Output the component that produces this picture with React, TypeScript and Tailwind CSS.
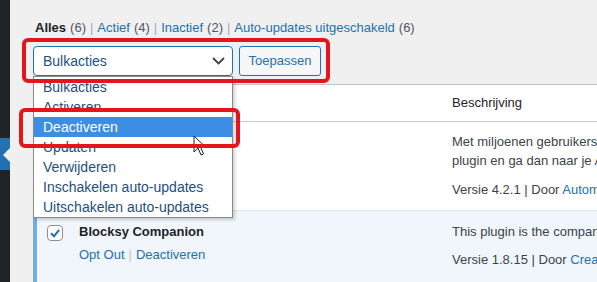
import React from 'react';

const options = [
  'Bulkacties',
  'Activeren',
  'Deactiveren',
  'Updaten',
  'Verwijderen',
  'Inschakelen auto-updates',
  'Uitschakelen auto-updates',
];

const Sep = () => <span className="px-[4px] text-[#a7aaad]">|</span>;

const Checkbox = ({ checked }: { checked?: boolean }) => (
  <span className="flex h-[16px] w-[16px] items-center justify-center rounded-[4px] border border-[#8c8f94] bg-white">
    {checked && (
      <svg width="14" height="14" viewBox="0 0 14 14">
        <path d="M3 7.2 L6 10.2 L11.2 3.8" fill="none" stroke="#2271b1" strokeWidth="2" />
      </svg>
    )}
  </span>
);

const App = () => {
  return (
    <div className="relative flex h-[282px] w-[597px] overflow-hidden bg-[#f0f0f1] font-['Liberation_Sans',Arial,sans-serif] text-[13px] text-[#3c434a]">
      {/* admin sidebar edge */}
      <aside className="flex w-[10px] shrink-0 flex-col bg-[#1d2327]">
        <div className="h-[138px]" />
        <div className="relative h-[32px] bg-[#2271b1]">
          <span className="absolute right-0 top-[10px] h-0 w-0 border-y-[7px] border-r-[7px] border-y-transparent border-r-[#f0f0f1]" />
        </div>
      </aside>

      <main className="min-w-0 flex-1 pl-[23px] pt-[19px]">
        {/* status filters */}
        <div className="flex h-[18px] items-center whitespace-nowrap pl-[2px] leading-[18px]">
          <span className="font-semibold text-[#1d2327]">Alles</span>
          <span className="ml-[4px] text-[#50575e]">(6)</span>
          <Sep />
          <span className="text-[#2271b1]">Actief</span>
          <span className="ml-[4px] text-[#50575e]">(4)</span>
          <Sep />
          <span className="text-[#2271b1]">Inactief</span>
          <span className="ml-[4px] text-[#50575e]">(2)</span>
          <Sep />
          <span className="text-[#2271b1]">Auto-updates uitgeschakeld</span>
          <span className="ml-[4px] text-[#50575e]">(6)</span>
        </div>

        {/* bulk actions */}
        <div className="mt-[9px] flex h-[30px]">
          <div className="flex h-[30px] w-[200px] items-center justify-between rounded-[4px] border border-[#2271b1] bg-white pl-[9px] pr-[7px] text-[14px] text-[#1d5080]">
            <span>Bulkacties</span>
            <svg width="13" height="8" viewBox="0 0 13 8">
              <path d="M1 1 L6.5 6.5 L12 1" fill="none" stroke="#3c434a" strokeWidth="1.8" />
            </svg>
          </div>
          <button className="ml-[6px] h-[30px] w-[82px] rounded-[3px] border border-[#2271b1] bg-[#f6f7f7] text-[13px] text-[#2271b1]">
            Toepassen
          </button>
        </div>

        {/* plugins table */}
        <div className="mt-[8px] w-[700px] border-t border-[#c3c4c7]">
          <div className="flex h-[37px] items-center border-b border-l border-[#c3c4c7] bg-white">
            <div className="w-[418px] shrink-0" />
            <div className="shrink-0 text-[#1d2327]">Beschrijving</div>
          </div>

          <div className="flex h-[89px] border-b border-l border-b-[#e2e4e7] border-l-[#c3c4c7] bg-white">
            <div className="w-[418px] shrink-0" />
            <div className="shrink-0 whitespace-nowrap pt-[10px] leading-[19px]">
              <div>Met miljoenen gebruikers is Akismet misschien wel de beste manier om je site te beschermen.</div>
              <div>plugin en ga dan naar je Akismet-instellingen pagina om je API-sleutel in te stellen.</div>
              <div className="mt-[10px]">
                Versie 4.2.1 | Door <span className="text-[#2271b1]">Automattic</span> |{' '}
                <span className="text-[#2271b1]">Details bekijken</span>
              </div>
            </div>
          </div>

          <div className="flex h-[80px] border-l-4 border-[#72aee6] bg-[#f0f6fc]">
            <div className="w-[42px] shrink-0 pl-[10px] pt-[14px]">
              <Checkbox checked />
            </div>
            <div className="w-[373px] shrink-0 pt-[11px] leading-[19px]">
              <div className="font-bold text-[#1d2327]">Blocksy Companion</div>
              <div className="mt-[4px] whitespace-nowrap text-[#2271b1]">
                Opt Out<span className="px-[4px] text-[#c3c4c7]">|</span>Deactiveren
              </div>
            </div>
            <div className="shrink-0 whitespace-nowrap pt-[11px] leading-[19px]">
              <div>This plugin is the companion for the Blocksy theme, it runs and adds its enhancements.</div>
              <div className="mt-[9px]">
                Versie 1.8.15 | Door <span className="text-[#2271b1]">CreativeThemes</span> |{' '}
                <span className="text-[#2271b1]">Details bekijken</span>
              </div>
            </div>
          </div>
        </div>
      </main>

      {/* open select list */}
      <div className="absolute left-[33px] top-[76px] w-[200px] border border-[#8a8a8a] bg-white shadow-[2px_2px_3px_rgba(0,0,0,0.18)]">
        {options.map((o) => (
          <div
            key={o}
            className={
              o === 'Deactiveren'
                ? 'h-[20px] bg-[#3b8ee4] pl-[9px] text-[14px] leading-[20px] text-white'
                : 'h-[20px] pl-[9px] text-[14px] leading-[20px] text-[#1d5080]'
            }
          >
            {o}
          </div>
        ))}
      </div>

      {/* mouse pointer */}
      <svg className="absolute left-[193px] top-[135px]" width="14" height="22" viewBox="0 0 14 22">
        <path d="M1 1 L1 17 L5 13 L8 20 L10.5 19 L7.5 12 L12.5 12 Z" fill="white" stroke="#222" strokeWidth="1" strokeLinejoin="round" />
      </svg>

      {/* annotation boxes */}
      <div className="absolute left-[22px] top-[38px] h-[45px] w-[308px] rounded-[6px] border-4 border-[#e5161b]" />
      <div className="absolute left-[19px] top-[108px] h-[40px] w-[221px] rounded-[6px] border-4 border-[#e5161b]" />
    </div>
  );
};

export default App;
